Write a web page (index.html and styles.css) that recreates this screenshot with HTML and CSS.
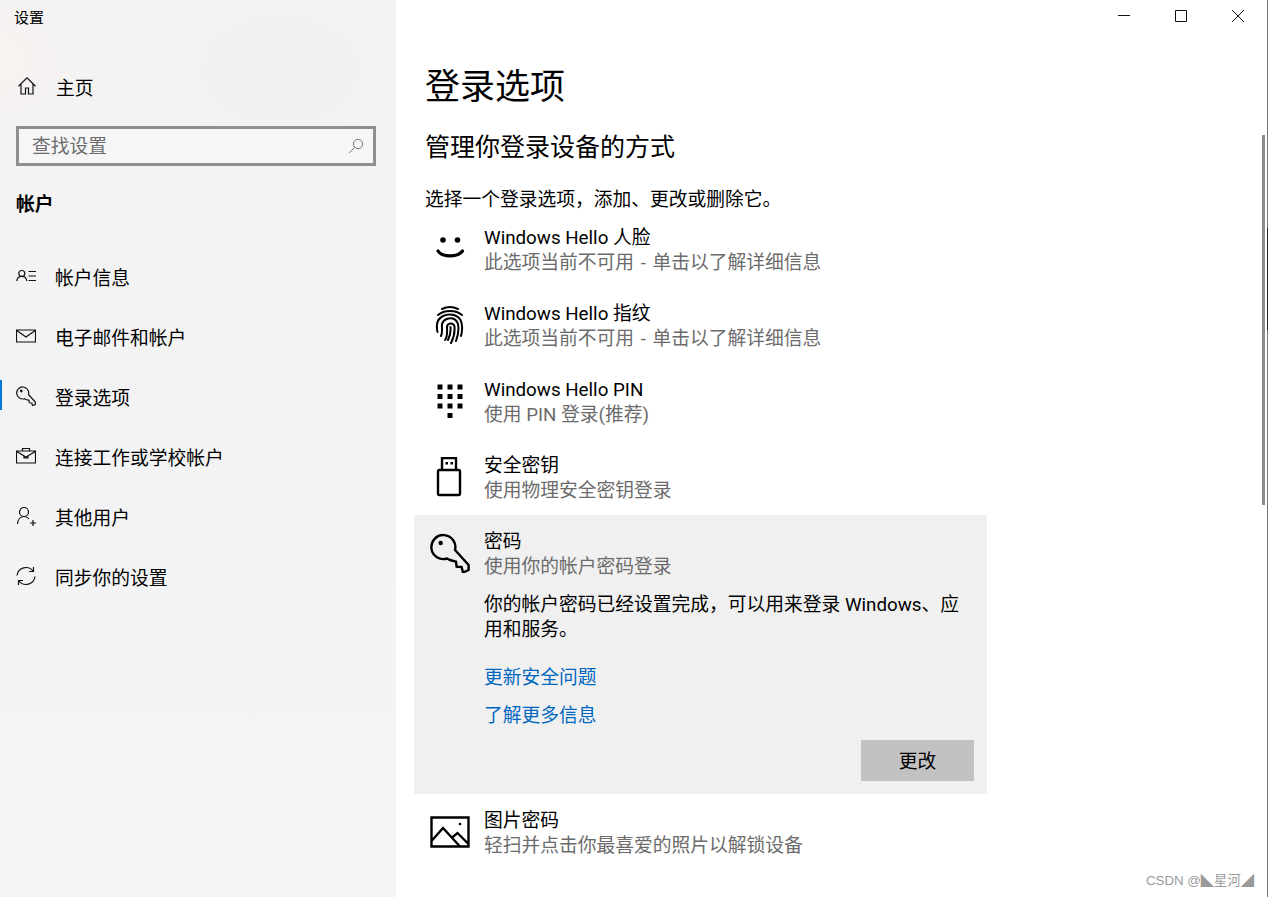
FILE: index.html
```html
<!DOCTYPE html>
<html lang="zh-CN">
<head>
<meta charset="utf-8">
<title>设置</title>
<link rel="stylesheet" href="styles.css">
</head>
<body>
<div class="window">
  <aside class="sidebar">
    <div class="app-title">设置</div>
    <div class="nav-home">
      <svg class="nav-icon" viewBox="0 0 20 20"><path d="M1.500 10.200 10 1.800l8.500 8.400M4 8v10h4.500v-6h3v6H16V8" /></svg>
      <span>主页</span>
    </div>
    <div class="search">
      <span class="search-text">查找设置</span>
      <svg class="search-icon" viewBox="0 0 16 16"><circle cx="10" cy="6" r="4.600"/><path d="M6.700 9.300 1 15"/></svg>
    </div>
    <div class="section-title">帐户</div>
    <nav class="nav">
      <div class="nav-item">
        <svg class="nav-icon" viewBox="0 0 20 20"><circle cx="5.800" cy="7.500" r="3"/><path d="M.8 15c.3-3 2.300-4.600 5-4.600s4.700 1.600 5 4.600M12.500 5.500H20M12.500 10H20M12.500 14.500H20"/></svg>
        <span>帐户信息</span>
      </div>
      <div class="nav-item">
        <svg class="nav-icon" viewBox="0 0 20 20"><path d="M.5 4h19v12H.5zM.8 4.500 10 11l9.200-6.500"/></svg>
        <span>电子邮件和帐户</span>
      </div>
      <div class="nav-item active">
        <svg class="nav-icon" viewBox="0 0 20 20"><path d="M12.500 8.500A6 6 0 1 0 8.500 12.700l1.500.8 3 .8.300 2.500 2.500.2.700 2.700 2.800-1.200v-2.500z"/><circle cx="5.300" cy="5" r=".8"/></svg>
        <span>登录选项</span>
      </div>
      <div class="nav-item">
        <svg class="nav-icon" viewBox="0 0 20 20"><path d="M.5 5h19v12H.5zM6.500 5V2.500h7V5M.8 5.500 10 11l9.200-5.500M8 10v2h4v-2"/></svg>
        <span>连接工作或学校帐户</span>
      </div>
      <div class="nav-item">
        <svg class="nav-icon" viewBox="0 0 20 20"><circle cx="8" cy="6" r="4.500"/><path d="M1.500 18c.3-4.500 3-7.500 6.500-7.500 2 0 3.700.8 5 2.500M14 17h6M17 14v6"/></svg>
        <span>其他用户</span>
      </div>
      <div class="nav-item">
        <svg class="nav-icon" viewBox="0 0 20 20"><path d="M1 9.500A9 9 0 0 1 17 5M19 10.500A9 9 0 0 1 3 15M17.500 1v4.500H13M2.500 19v-4.500H7"/></svg>
        <span>同步你的设置</span>
      </div>
    </nav>
  </aside>

  <main class="main">
    <div class="titlebar">
      <svg class="win-btn" viewBox="0 0 12 12"><path d="M0 5.500h12"/></svg>
      <svg class="win-btn" viewBox="0 0 12 12"><path d="M.5.500h11v11H.5z"/></svg>
      <svg class="win-btn" viewBox="0 0 12 12"><path d="M0 0l12 12M12 0 0 12"/></svg>
    </div>
    <h1 class="page-title">登录选项</h1>
    <h2 class="page-subtitle">管理你登录设备的方式</h2>
    <p class="intro">选择一个登录选项&#xFF0C;添加、更改或删除它。</p>

    <div class="options">
      <div class="option">
        <svg class="opt-icon" viewBox="0 0 40 40"><circle class="solid" cx="13" cy="11" r="2.800"/><circle class="solid" cx="27.500" cy="11" r="2.800"/><path class="thick" d="M8 22c4 6.500 20 6.500 24.500 0"/></svg>
        <div class="opt-text"><div class="opt-name">Windows Hello 人脸</div><div class="opt-desc spaced">此选项当前不可用 - 单击以了解详细信息</div></div>
      </div>
      <div class="option">
        <svg class="opt-icon" viewBox="0 0 40 40"><path class="fine" d="M12 4C17 1.500 23 1.500 28 4M8 10C14 4.500 26 4.500 32 10M7.500 27C5.500 18 8 13.500 13 11 19 8 27 9.500 30.500 15 32.500 19 32.500 25 31 31M11 31C13 27 11.500 23 12 19 13.500 14 19 12.500 23 13.500 27 15 28.500 19 28.500 23 28.500 28 27.500 32 26 36M15 35C18 31 17 26 17 21.500 18 17.500 23.500 17.500 24.500 21.500 25 27 23.500 33 21 38M20.500 22C21 27 20 31 18 35"/></svg>
        <div class="opt-text"><div class="opt-name">Windows Hello 指纹</div><div class="opt-desc spaced">此选项当前不可用 - 单击以了解详细信息</div></div>
      </div>
      <div class="option">
        <svg class="opt-icon" viewBox="0 0 40 40"><g class="solid"><rect x="7.500" y="3.500" width="5" height="5"/><rect x="17.500" y="3.500" width="5" height="5"/><rect x="27.500" y="3.500" width="5" height="5"/><rect x="7.500" y="13" width="5" height="5"/><rect x="17.500" y="13" width="5" height="5"/><rect x="27.500" y="13" width="5" height="5"/><rect x="7.500" y="22.500" width="5" height="5"/><rect x="17.500" y="22.500" width="5" height="5"/><rect x="27.500" y="22.500" width="5" height="5"/><rect x="17.500" y="32" width="5" height="5"/></g></svg>
        <div class="opt-text"><div class="opt-name">Windows Hello PIN</div><div class="opt-desc">使用 PIN 登录(推荐)</div></div>
      </div>
      <div class="option">
        <svg class="opt-icon" viewBox="0 0 40 40"><path class="med" d="M12 13V1h14v12M9.500 13h19a1.500 1.500 0 0 1 1.500 1.500v22a1.500 1.500 0 0 1-1.500 1.500h-19A1.500 1.500 0 0 1 8 36.500v-22A1.500 1.500 0 0 1 9.500 13z"/><rect class="solid" x="15.500" y="5" width="2.500" height="2.500"/><rect class="solid" x="20.500" y="5" width="2.500" height="2.500"/></svg>
        <div class="opt-text"><div class="opt-name">安全密钥</div><div class="opt-desc">使用物理安全密钥登录</div></div>
      </div>
      <div class="option expanded">
        <div class="option-head">
          <svg class="opt-icon" viewBox="0 0 40 40"><path class="med" d="M25 17A12 12 0 1 0 17 25.500L20 27l6 1.600.6 5 5 .4 1.400 5.500 5.600-2.500v-5z"/><circle class="solid" cx="10.700" cy="10" r="2.200"/></svg>
          <div class="opt-text"><div class="opt-name">密码</div><div class="opt-desc">使用你的帐户密码登录</div></div>
        </div>
        <div class="panel">
          <p class="panel-text">你的帐户密码已经设置完成&#xFF0C;可以用来登录 Windows、应用和服务。</p>
          <a class="link">更新安全问题</a>
          <a class="link">了解更多信息</a>
          <div class="actions"><span class="btn">更改</span></div>
        </div>
      </div>
      <div class="option">
        <svg class="opt-icon" viewBox="0 0 40 40"><path class="med" d="M1.500 5.500h37v29h-37zM1.500 29 13 16l17 18.500M21.500 26l6-5 11 11"/><circle class="solid" cx="30" cy="12" r="1.300"/></svg>
        <div class="opt-text"><div class="opt-name">图片密码</div><div class="opt-desc">轻扫并点击你最喜爱的照片以解锁设备</div></div>
      </div>
    </div>
    <div class="scrollbar"></div>
    <div class="edge"></div>
    <div class="watermark">CSDN @◣星河◢</div>
  </main>
</div>
</body>
</html>
```

FILE: styles.css
```css
* { box-sizing: border-box; }
html, body { margin: 0; padding: 0; }
body {
  font-family: Roboto, "Noto Sans CJK SC", sans-serif;
  color: #000;
  background: #fff;
}
.window {
  display: flex;
  width: 1268px;
  height: 897px;
  overflow: hidden;
}
.sidebar {
  width: 396px;
  flex: none;
  background:
    radial-gradient(ellipse 130px 90px at 280px 70px, #efefee 0%, rgba(239,239,238,0) 100%),
    radial-gradient(ellipse 200px 200px at 0 60px, #f6f3f1 0%, rgba(246,243,241,0) 100%),
    linear-gradient(180deg, #f3f3f3 0%, #f3f3f4 40%, #f3f4f6 100%);
}
.app-title {
  font-size: 15px;
  line-height: 20px;
  padding: 8px 0 0 14px;
  height: 60px;
}
.nav-home {
  display: flex;
  align-items: center;
  height: 52px;
  padding-left: 17px;
  font-size: 18.75px;
}
.nav-icon {
  width: 20px;
  height: 20px;
  flex: none;
  margin-right: 19px;
  fill: none;
  stroke: #111;
  stroke-width: 1.2;
}
.search {
  display: flex;
  align-items: center;
  justify-content: space-between;
  margin: 14px 20px 0 16px;
  height: 40px;
  border: 3px solid #8f8f8f;
  background: #f6f6f7;
  padding: 0 9px 0 13px;
  font-size: 18.75px;
  color: #6d6d6d;
}
.search-text { padding-bottom: 4px; }
.search-icon {
  width: 16px;
  height: 16px;
  fill: none;
  stroke: #777;
  stroke-width: 1;
}
.section-title {
  font-size: 18.75px;
  line-height: 25px;
  font-weight: 700;
  padding: 27px 0 0 16px;
}
.nav { padding-top: 28px; }
.nav-item {
  position: relative;
  display: flex;
  align-items: center;
  height: 60px;
  padding-left: 16px;
  font-size: 18.75px;
}
.nav-item.active::before {
  content: "";
  position: absolute;
  left: 0;
  top: 14px;
  width: 2px;
  height: 30px;
  background: #0078d7;
}
.main {
  position: relative;
  flex: 1;
  padding-left: 18px;
}
.titlebar {
  display: flex;
  justify-content: flex-end;
  align-items: flex-start;
  gap: 45px;
  height: 32px;
  padding: 10px 24px 0 0;
}
.win-btn {
  width: 12px;
  height: 12px;
  fill: none;
  stroke: #111;
  stroke-width: 1;
}
.page-title {
  margin: 0;
  padding-left: 11px;
  font-size: 35px;
  line-height: 44px;
  font-weight: 400;
  padding-top: 34px;
}
.page-subtitle {
  margin: 0;
  padding-left: 11px;
  font-size: 25px;
  line-height: 34px;
  font-weight: 400;
  padding-top: 21px;
}
.intro {
  margin: 0 0 -2px;
  padding: 23px 0 0 11px;
  font-size: 18.75px;
  line-height: 25px;
}
.options { width: 573px; }
.option {
  display: flex;
  align-items: flex-start;
  padding: 13px 13px 11px 16px;
}
.option.expanded {
  display: block;
  background: #f0f0f0;
  height: 279px;
}
.option-head { display: flex; align-items: flex-start; }
.opt-icon {
  width: 40px;
  height: 40px;
  flex: none;
  margin: 5px 14px 0 0;
  fill: none;
  stroke: #000;
}
.opt-text { padding-top: 2px; }
.solid { fill: #000; stroke: none; }
.thick { stroke-width: 3.2; stroke-linecap: round; }
.med { stroke-width: 2.4; }
.fine { stroke-width: 2; stroke-linecap: round; }
.opt-name {
  font-size: 18.75px;
  line-height: 25px;
}
.opt-desc {
  font-size: 18.75px;
  line-height: 25px;
  color: #6b6b6b;
}
.spaced { word-spacing: 2px; }
.panel { padding-left: 54px; }
.panel-text {
  margin: 0;
  padding-top: 13px;
  font-size: 18.75px;
  line-height: 25px;
  width: 490px;
}
.link {
  display: block;
  font-size: 18.75px;
  line-height: 25px;
  color: #0067c0;
  margin-top: 13px;
}
.panel-text + .link { margin-top: 23px; }
.actions {
  display: flex;
  justify-content: flex-end;
  margin-top: 11px;
}
.btn {
  display: flex;
  align-items: center;
  justify-content: center;
  width: 113px;
  height: 41px;
  padding-bottom: 2px;
  background: #c2c2c2;
  font-size: 18.75px;
}
.scrollbar {
  position: absolute;
  right: 3px;
  top: 135px;
  width: 3px;
  height: 370px;
  background: #8c8c8c;
}
.edge {
  position: absolute;
  right: 0;
  top: 0;
  width: 1px;
  height: 897px;
  background: linear-gradient(180deg, #777 0, #777 228px, #222 228px, #222 330px, #777 330px);
}
.watermark {
  position: absolute;
  right: 14px;
  bottom: 7px;
  font-family: "Liberation Sans", "Noto Sans CJK SC", sans-serif;
  font-size: 13.3px;
  line-height: 18px;
  color: #9a9a9a;
}
```
